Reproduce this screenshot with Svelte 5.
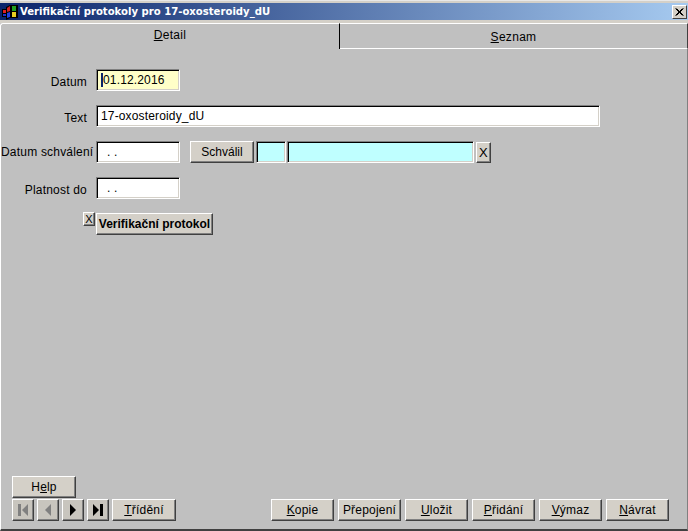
<script>
const tools = [
  { key: 'K', rest: 'opie' },
  { key: '', rest: 'Přepojení' },
  { key: 'U', rest: 'ložit' },
  { key: 'P', rest: 'řidání' },
  { key: 'V', rest: 'ýmaz' },
  { key: 'N', rest: 'ávrat' },
]
</script>

<div class="window">
  <div class="titlebar">
    <svg class="logo" viewBox="0 0 16 16">
      <path d="M0 5h4V3l4-2h8v13h-8l-4 2v-3H0z" fill="#000"/>
      <path d="M1 6h3v3H1z" fill="#e02020"/>
      <path d="M1 10h3v2H1z" fill="#2030d0"/>
      <path d="M5 4l3-2v5l-3 1z" fill="#d02020"/>
      <path d="M10 2h4v5h-4z" fill="#20a020"/>
      <path d="M5 9l3-1v5l-3 1z" fill="#2040e0"/>
      <path d="M10 8h4v5h-4z" fill="#e8d020"/>
    </svg>
    <span class="title">Verifikační protokoly pro 17-oxosteroidy_dU</span>
    <button class="close" aria-label="close">
      <svg viewBox="0 0 9 8" width="9" height="8"><path d="M0.500 0.500l7 7M1.500 0.500l7 7M7.500 0.500l-7 7M8.500 0.500l-7 7" stroke="#000"/></svg>
    </button>
  </div>

  <div class="tabs">
    <div class="tab active"><span><u>D</u>etail</span></div>
    <div class="tab"><span><u>S</u>eznam</span></div>
  </div>

  <div class="page">
    <div class="form">
      <div class="row">
        <span class="label">Datum</span>
        <div class="field date yellow"><i class="caret"></i>01.12.2016</div>
      </div>
      <div class="row">
        <span class="label">Text</span>
        <div class="field long">17-oxosteroidy_dU</div>
      </div>
      <div class="row">
        <span class="label wide">Datum schválení</span>
        <div class="field date dots">. .</div>
        <button class="btn schvalil">Schválil</button>
        <div class="field code cyan"></div>
        <div class="field name cyan"></div>
        <button class="btn clear">X</button>
      </div>
      <div class="row">
        <span class="label">Platnost do</span>
        <div class="field date dots">. .</div>
      </div>
      <div class="row protocol">
        <button class="btn tiny">X</button>
        <button class="btn verif">Verifikační protokol</button>
      </div>
    </div>

    <div class="bottom">
      <button class="btn help">H<u>e</u>lp</button>
      <div class="bar">
        <div class="nav">
          <button class="btn arrow off" aria-label="first">
            <svg viewBox="0 0 12 14" width="12" height="14"><path d="M1 1h3v12H1zM11 1v12L5 7z" fill="#808080"/></svg>
          </button>
          <button class="btn arrow off" aria-label="previous">
            <svg viewBox="0 0 12 14" width="12" height="14"><path d="M9 1v12L3 7z" fill="#808080"/></svg>
          </button>
          <button class="btn arrow" aria-label="next">
            <svg viewBox="0 0 12 14" width="12" height="14"><path d="M3 1v12l6-6z" fill="#000"/></svg>
          </button>
          <button class="btn arrow" aria-label="last">
            <svg viewBox="0 0 12 14" width="12" height="14"><path d="M1 1v12l6-6zM8 1h3v12H8z" fill="#000"/></svg>
          </button>
          <button class="btn sort"><u>T</u>řídění</button>
        </div>
        <div class="actions">
          {#each tools as tool}
            <button class="btn action"><u>{tool.key}</u>{tool.rest}</button>
          {/each}
        </div>
      </div>
    </div>
  </div>
</div>

<style>
:global(body) { margin: 0; background: #d4d0c8; }
.window { width: 688px; height: 531px; box-sizing: border-box; padding-top: 2px; background: #d4d0c8; border-top: 1px solid #e8e8e8; display: flex; flex-direction: column; overflow: hidden; font-family: "Liberation Sans", Arial, sans-serif; font-size: 12px; color: #000; }
.titlebar { height: 17px; flex-shrink: 0; display: flex; align-items: center; background: linear-gradient(90deg, #0a246a, #a6caf0); color: #fff; }
.logo { width: 16px; height: 16px; margin: 0 2px 0 2px; flex-shrink: 0; }
.title { font-family: "DejaVu Sans", Verdana, sans-serif; font-weight: 700; font-size: 10.100px; white-space: nowrap; }
.close { margin-left: auto; margin-right: 1px; width: 15px; height: 14px; padding: 0; box-sizing: border-box; background: #d4d0c8; border: 1px solid; border-color: #fff #404040 #404040 #fff; display: flex; align-items: center; justify-content: center; }
.tabs { margin-top: 3px; height: 26px; flex-shrink: 0; display: flex; background: #c0c0c0; letter-spacing: 0.3px; }
.tab { display: flex; align-items: center; justify-content: center; box-sizing: border-box; border-top: 1px solid #fff; border-bottom: 1px solid #fff; }
.tab.active { width: 340px; border-bottom: 0; border-left: 1px solid #fff; border-right: 1px solid #000; border-radius: 3px 0 0 0; padding-bottom: 4px; }
.tab:not(.active) { flex: 1; border-right: 1px solid #404040; padding-top: 2px; }
.page { flex: 1; min-height: 0; box-sizing: border-box; background: #c0c0c0; border-left: 1px solid #fff; border-right: 1px solid #808080; border-bottom: 2px solid #404040; display: flex; flex-direction: column; justify-content: space-between; padding: 20px 0 8px; }
.form { display: flex; flex-direction: column; gap: 14px; }
.row { display: flex; align-items: center; height: 22px; }
.label { width: 95px; box-sizing: border-box; padding-right: 9px; text-align: right; white-space: nowrap; flex-shrink: 0; padding-top: 3px; letter-spacing: 0.2px; }
.label.wide { padding-right: 3px; padding-top: 0; }
.field { height: 22px; box-sizing: border-box; background: #fff; border: 1px solid; border-color: #808080 #fff #fff #808080; box-shadow: inset 1px 1px 0 #000, inset -1px -1px 0 #d4d0c8; padding: 1px 0 0 4px; line-height: 18px; white-space: nowrap; letter-spacing: 0.15px; flex-shrink: 0; }
.date { width: 84px; }
.long { width: 504px; }
.yellow { background: #ffffc8; }
.cyan { background: #bfffff; }
.dots { padding-left: 10px; }
.caret { display: inline-block; width: 2px; height: 14px; background: #0a246a; vertical-align: middle; margin: -2px 0 0 0; }
.code { width: 30px; margin-left: 2px; }
.name { width: 187px; margin-left: 1px; }
.btn { box-sizing: border-box; padding: 0; background: #d4d0c8; border: 1px solid; border-color: #fff #404040 #404040 #fff; box-shadow: inset -1px -1px 0 #808080; font: inherit; color: #000; white-space: nowrap; letter-spacing: 0.2px; flex-shrink: 0; }
.schvalil { width: 64px; height: 22px; margin-left: 10px; letter-spacing: 0; }
.clear { width: 15px; height: 21px; margin: 1px 0 0 2px; font-size: 13px; }
.protocol { margin-left: 82px; align-items: flex-start; }
.tiny { width: 12px; height: 14px; margin-top: -1px; font-size: 11px; line-height: 12px; }
.verif { width: 117px; height: 22px; margin-left: 1px; font-weight: 700; letter-spacing: 0; }
.bottom { padding: 0 18px 0 11px; display: flex; flex-direction: column; gap: 1px; }
.help { width: 64px; height: 22px; }
.bar { display: flex; justify-content: space-between; }
.nav { display: flex; gap: 3px; }
.arrow { width: 22px; height: 22px; display: flex; align-items: center; justify-content: center; background: #c8c5be; }
.sort { width: 64px; height: 22px; }
.actions { display: flex; gap: 4px; }
.action { width: 63px; height: 22px; }
</style>
